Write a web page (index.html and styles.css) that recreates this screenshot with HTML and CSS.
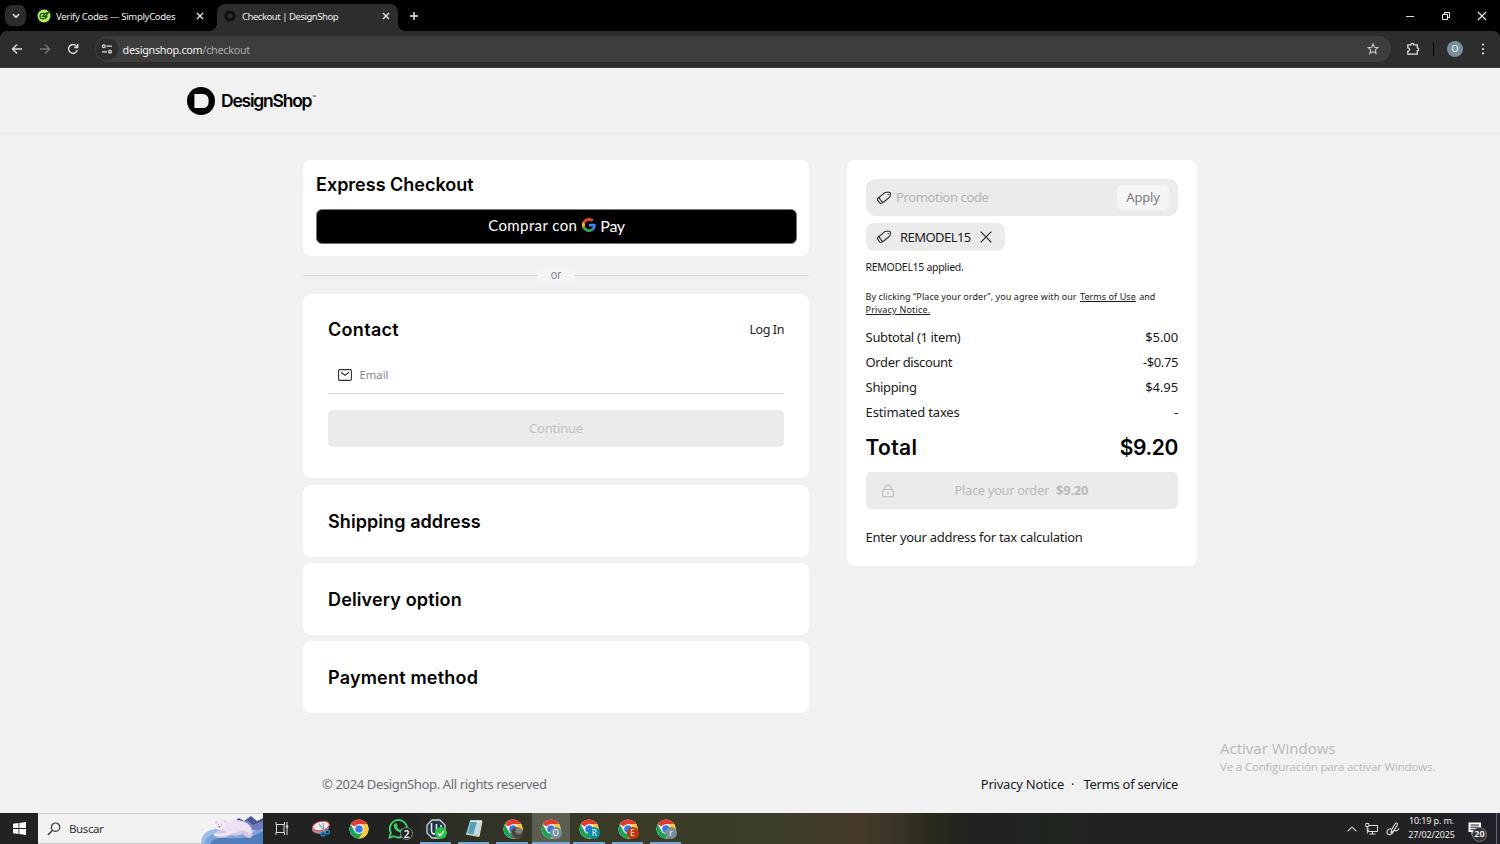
FILE: index.html
```html
<!DOCTYPE html>
<html lang="es">
<head>
<meta charset="utf-8">
<title>Checkout | DesignShop</title>
<link rel="stylesheet" href="styles.css">
</head>
<body>
<svg class="defs" width="0" height="0" aria-hidden="true">
  <symbol id="chrome" viewBox="0 0 20 20">
    <circle cx="10" cy="10" r="9.6" fill="#fff"/>
    <path d="M10 10 1.7 5.2A9.6 9.6 0 0 1 18.3 5.2H10Z" fill="#e33b2e"/>
    <path d="M10 5.200H18.300A9.600 9.600 0 0 1 10 19.600L14.200 12.400Z" fill="#fcc934"/>
    <path d="M1.7 5.2A9.6 9.6 0 0 0 10 19.6L14.2 12.4 10 14.5 5.8 12.4Z" fill="#1fa152"/>
    <circle cx="10" cy="10" r="4.8" fill="#fff"/><circle cx="10" cy="10" r="3.8" fill="#3b78e7"/>
  </symbol>
  <symbol id="tag" viewBox="0 0 16 14">
    <path d="M4 5.600 8.800 1.700Q9.400 1.200 10.200 1.200L13.200 1.300Q14.500 1.400 14.500 2.600L14.200 5Q14 5.900 13.400 6.400L7.800 11Q6.700 11.700 5.800 10.700L3.700 7.900Q3 6.500 4 5.600ZM4 5.600 2 7Q.8 8 1.500 9.200L3.700 11.900Q4.600 12.900 5.700 12.100L7.400 11.200" fill="none" stroke="#222" stroke-width="1.050" stroke-linejoin="round"/><circle cx="12.200" cy="3.600" r=".7" fill="#222"/>
  </symbol>
</svg>

<div class="tabs">
  <div class="tab-search"><svg width="8" height="6" viewBox="0 0 8 6"><path d="m1 1.2 3 3 3-3" fill="none" stroke="#eee" stroke-width="1.5"/></svg></div>
  <div class="tab tab-idle">
    <svg width="14" height="14" viewBox="0 0 14 14"><circle cx="7" cy="7" r="6.5" fill="#b0f45b"/><path d="M7.500 4.300H5.800a2.800 2.800 0 1 0 2.700 3.500M5.600 7.400h2.700L11.600 3.400 8.300 4.600 5.600 7.400Zm2.600 2 2.200-2.800" fill="none" stroke="#244b16" stroke-width="1.2"/></svg>
    <span class="tab-title title-one">Verify Codes — SimplyCodes</span>
    <svg class="close" width="8" height="8" viewBox="0 0 8 8"><path d="m1 1 6 6M7 1 1 7" stroke="#eee" stroke-width="1.3"/></svg>
  </div>
  <div class="tab tab-active">
    <svg width="12" height="12" viewBox="0 0 12 12"><circle cx="6" cy="6" r="5.5" fill="#111"/><path d="M4 3.8h2.600a1.800 1.800 0 0 1 1.800 1.800v.8a1.800 1.800 0 0 1-1.800 1.800H4Z" fill="#303030"/></svg>
    <span class="tab-title title-two">Checkout | DesignShop</span>
    <svg class="close" width="8" height="8" viewBox="0 0 8 8"><path d="m1 1 6 6M7 1 1 7" stroke="#eee" stroke-width="1.3"/></svg>
  </div>
  <svg class="new-tab" width="10" height="10" viewBox="0 0 10 10"><path d="M5 1v8M1 5h8" stroke="#eee" stroke-width="1.4"/></svg>
  <div class="window-controls">
    <svg width="10" height="10" viewBox="0 0 10 10"><path d="M1 5.500h8" stroke="#ddd"/></svg>
    <svg width="10" height="10" viewBox="0 0 10 10"><path d="M1.500 3.500h5v5h-5ZM3.500 3.500v-2h5v5h-2" fill="none" stroke="#eee"/></svg>
    <svg width="10" height="10" viewBox="0 0 10 10"><path d="m1 1 8 8M9 1 1 9" stroke="#eee" stroke-width="1.1"/></svg>
  </div>
</div>

<div class="toolbar">
  <svg class="nav-icon" width="12" height="12" viewBox="0 0 12 12"><path d="M11 6H1.700M6 1.500 1.500 6 6 10.500" fill="none" stroke="#ddd" stroke-width="1.4"/></svg>
  <svg class="nav-icon" width="12" height="12" viewBox="0 0 12 12"><path d="M1 6h9.300M6 1.500 10.500 6 6 10.500" fill="none" stroke="#777" stroke-width="1.3"/></svg>
  <svg class="nav-icon" width="12" height="12" viewBox="0 0 12 12"><path d="M10.300 6.800A4.400 4.400 0 1 1 9.300 3L10.500 4.200M10.700 1v3.500H7.200" fill="none" stroke="#ddd" stroke-width="1.4"/></svg>
  <div class="omnibox">
    <div class="site-info"><svg width="12" height="12" viewBox="0 0 12 12"><path d="M5.500 3.200H11M1 8.800h5" stroke="#ddd" stroke-width="1.3"/><circle cx="2.800" cy="3.200" r="1.4" fill="none" stroke="#ddd" stroke-width="1.2"/><circle cx="9" cy="8.800" r="1.4" fill="none" stroke="#ddd" stroke-width="1.2"/></svg></div>
    <span class="url">designshop.com<span class="url-path">/checkout</span></span>
    <svg class="star" width="12" height="12" viewBox="0 0 12 12"><path d="m6 1 1.400 3.300 3.600.3-2.700 2.300.8 3.600L6 8.600l-3.100 1.900.8-3.600L1 4.600l3.600-.3Z" fill="none" stroke="#ccc" stroke-width="1.1"/></svg>
  </div>
  <svg class="extension" width="14" height="14" viewBox="0 0 14 14"><path d="M1.800 2.800H5a1.400 1.400 0 0 1 2.800 0h3.500v3a1.500 1.500 0 0 1 0 3v3.400H1.800V9.300a1.600 1.600 0 0 0 0-3.400Z" fill="none" stroke="#ddd" stroke-width="1.3"/></svg>
  <span class="divider"></span>
  <span class="avatar">O</span>
  <svg class="menu" width="4" height="12" viewBox="0 0 4 12"><g fill="#ddd"><circle cx="2" cy="1.6" r="1.1"/><circle cx="2" cy="6" r="1.1"/><circle cx="2" cy="10.4" r="1.1"/></g></svg>
</div>

<header class="site-header">
  <svg width="28" height="28" viewBox="0 0 28 28"><circle cx="14" cy="14" r="14" fill="#000"/><path d="M7.400 7H16a5.600 5.600 0 0 1 5.600 5.600v3A5.400 5.400 0 0 1 16.200 21H7.400Z" fill="#f1f1f1"/></svg>
  <span class="wordmark">DesignShop</span><span class="tm">™</span>
</header>

<div class="checkout">
  <main class="steps">
    <section class="card express">
      <h2 class="w-express">Express Checkout</h2>
      <div class="gpay"><span class="gpay-buy">Comprar con</span>
        <svg width="14" height="14" viewBox="0 0 48 48"><path fill="#ea4335" d="M24 9.500c3.500 0 6.700 1.200 9.200 3.600l6.900-6.900C35.900 2.400 30.500 0 24 0 14.600 0 6.500 5.400 2.600 13.200l8 6.200C12.400 13.700 17.700 9.500 24 9.500Z"/><path fill="#4285f4" d="M47 24.600c0-1.600-.2-3.100-.4-4.600H24v9h12.900c-.6 3-2.200 5.500-4.700 7.200l7.700 6C44.400 38 47 31.800 47 24.600Z"/><path fill="#fbbc05" d="M10.500 28.600a14.500 14.500 0 0 1 0-9.200l-8-6.200a24 24 0 0 0 0 21.600Z"/><path fill="#34a853" d="M24 48c6.500 0 11.900-2.100 15.900-5.800l-7.700-6c-2.200 1.500-4.900 2.300-8.200 2.300-6.300 0-11.600-4.200-13.500-9.900l-8 6.200C6.500 42.600 14.600 48 24 48Z"/></svg>
        <span class="gpay-pay">Pay</span></div>
    </section>
    <div class="or"><span class="or-label">or</span></div>
    <section class="card contact">
      <div class="contact-head"><h2 class="w-contact">Contact</h2><span class="login">Log In</span></div>
      <div class="email"><svg width="14" height="12" viewBox="0 0 14 12"><rect x=".6" y=".6" width="12.800" height="10.800" rx="1.200" fill="none" stroke="#333" stroke-width="1.100"/><path d="m3 3.300 4 3 4-3" fill="none" stroke="#333" stroke-width="1.100"/></svg><span class="email-label">Email</span></div>
      <div class="continue"><span>Continue</span></div>
    </section>
    <section class="card step"><h2 class="w-shipping">Shipping address</h2></section>
    <section class="card step"><h2 class="w-delivery">Delivery option</h2></section>
    <section class="card step"><h2 class="w-payment">Payment method</h2></section>
  </main>

  <aside class="card summary">
    <div class="promo"><svg width="16" height="14"><use href="#tag"/></svg><span class="promo-hint">Promotion code</span><span class="apply">Apply</span></div>
    <div class="chip"><svg width="16" height="14"><use href="#tag"/></svg><span class="chip-code">REMODEL15</span><svg width="12" height="12" viewBox="0 0 12 12"><path d="m.7.7 10.600 10.600M11.300.7.7 11.300" stroke="#222" stroke-width="1.200"/></svg></div>
    <p class="applied"><span>REMODEL15 applied.</span></p>
    <p class="terms"><span class="terms-a">By clicking “Place your order”, you agree with our</span> <u class="terms-b">Terms of Use</u> <span class="terms-c">and</span><br><u class="terms-d">Privacy Notice.</u></p>
    <div class="row"><span class="r-sub">Subtotal (1 item)</span><span class="amount">$5.00</span></div>
    <div class="row"><span class="r-disc">Order discount</span><span class="amount amount-tight">-$0.75</span></div>
    <div class="row"><span class="r-ship">Shipping</span><span class="amount">$4.95</span></div>
    <div class="row"><span class="r-tax">Estimated taxes</span><span class="amount">-</span></div>
    <div class="total"><span class="total-label">Total</span><span class="total-sum">$9.20</span></div>
    <div class="place"><svg width="12" height="14" viewBox="0 0 12 14"><path d="M1.700 5.500h8.600q1 0 1 1v5.300q0 1-1 1H1.700q-1 0-1-1V6.500q0-1 1-1ZM3 5.500V4a3 3 0 0 1 6 0v1.500" fill="none" stroke="#b9b9b9" stroke-width="1.100"/><circle cx="6" cy="9.300" r=".9" fill="#b9b9b9"/></svg><span class="place-label">Place your order</span><b class="place-sum">$9.20</b></div>
    <p class="tax-note"><span>Enter your address for tax calculation</span></p>
  </aside>
</div>

<footer class="site-footer">
  <span class="copyright">© 2024 DesignShop. All rights reserved</span>
  <span class="legal"><span class="f-priv">Privacy Notice</span><span class="dot">·</span><span class="f-terms">Terms of service</span></span>
</footer>

<div class="watermark"><div class="wm-title"><span>Activar Windows</span></div><div class="wm-sub"><span>Ve a Configuración para activar Windows.</span></div></div>

<div class="taskbar">
  <div class="start"><svg width="13" height="13" viewBox="0 0 13 13"><path d="M0 1.800 5.500 1v5H0ZM6.300.9 13 0v6H6.300ZM0 6.900h5.500v5L0 11.200ZM6.300 6.900H13V13l-6.700-.9Z" fill="#fff"/></svg></div>
  <div class="search">
    <svg width="14" height="14" viewBox="0 0 14 14"><circle cx="8.600" cy="5.200" r="4.200" fill="none" stroke="#333" stroke-width="1.200"/><path d="M5.600 8.200.8 13" stroke="#333" stroke-width="1.300"/></svg>
    <span class="search-label">Buscar</span>
    <svg class="bear" width="62" height="30" viewBox="0 0 62 30">
      <path d="M32 8 38 4l5 3 7-5 6 5 6-3v22H36Z" fill="#4a5794"/><path d="m40 9 6-3 6 5 10-4v12H44Z" fill="#6f7dba"/>
      <path d="M0 30Q0 17 14 15q26-3 48 3v12Z" fill="#9dbfe6"/><path d="M3 30Q5 21 14 20q28 4 48-6v16Z" fill="#7ea5d8"/><path d="M9 30q3-7 14-6 26 2 39-7v13Z" fill="#4f7cbb"/>
      <path d="M15 18q3-3 8-3 4-8 14-8 11 0 14 8 2 8-2 9-4 0-7-4-6 3-12 1-6 4-15 2-3-2 0-5Z" fill="#d6c7e2"/>
      <path d="M20 14q5-8 15-8 10 0 14 7 2 5 0 8-5-7-12-3-9 4-17-4Z" fill="#ece1f2"/>
      <ellipse cx="20" cy="11.500" rx="5" ry="4.800" fill="#f3eaf4"/><circle cx="15.500" cy="8.200" r="1.500" fill="#ddcfe4"/><circle cx="24" cy="7.700" r="1.500" fill="#ddcfe4"/>
      <path d="M14 20.500q8 1.500 16-2" fill="none" stroke="#f1e7f4" stroke-width="2.500" stroke-linecap="round"/><ellipse cx="18.300" cy="12.600" rx=".9" ry=".7" fill="#4b4355"/><circle cx="17.300" cy="10.500" r=".4" fill="#444"/><circle cx="20.800" cy="10.300" r=".4" fill="#444"/>
    </svg>
  </div>
  <div class="app"><svg width="14" height="13" viewBox="0 0 14 13"><path d="M1 0v2.500h8.500V0M1 13v-2.500h8.500V13M1.500 2.500v8M9 2.500v8M12 0v13" fill="none" stroke="#ddd"/><path d="M10.800 3.500h2.400v2h-2.400Z" fill="#ddd"/></svg></div>
  <div class="app"><svg width="20" height="18" viewBox="0 0 20 18"><ellipse cx="9.500" cy="8" rx="8.700" ry="5.500" fill="#b08d8b" transform="rotate(-12 9.500 8)"/><ellipse cx="10" cy="6" rx="8.500" ry="4.600" fill="#edeaf0" stroke="#d1493f" transform="rotate(-12 10 6)"/><path d="m8 4 6 8m-2-9 1 9" stroke="#8e9aa6" stroke-width="1.200"/><circle cx="12" cy="14" r="1.900" fill="none" stroke="#1689c8" stroke-width="1.400"/><circle cx="16.500" cy="12" r="1.900" fill="none" stroke="#1689c8" stroke-width="1.400"/></svg></div>
  <div class="app"><svg width="20" height="20"><use href="#chrome"/></svg></div>
  <div class="app whatsapp"><svg width="21" height="21" viewBox="0 0 21 21"><path d="m1.500 19.500 1.300-4.700A8.700 8.700 0 1 1 6 18.200Z" fill="none" stroke="#38d366" stroke-width="1.900"/><path d="M7 5.500 8.500 5l1.200 2.500-.9 1.200q1.200 2.200 3.400 3.200l1.200-1.300 2.300 1.200q.2 3-3.200 3-3.500-.5-6-4.200-2-3.300.5-5.100Z" fill="#38d366"/></svg><span class="badge count">2</span></div>
  <div class="app open"><svg width="20" height="20" viewBox="0 0 20 20"><path d="M6 1h8l5 5v8l-5 5H6l-5-5V6Z" fill="#26364b" stroke="#cbd5de" stroke-width="1.300"/><path d="M5.500 4v7q0 4 2.500 4t2.500-5V5m0 5q0 5 2.500 4 2-1 2-8" fill="none" stroke="#e9eef2" stroke-width="1.500"/></svg><span class="badge check"><svg width="8" height="7" viewBox="0 0 8 7"><path d="m1 3.500 2 2L7 1" fill="none" stroke="#fff" stroke-width="1.600"/></svg></span></div>
  <div class="app open"><svg width="18" height="18" viewBox="0 0 18 18"><path d="M5 1h12l-3 15L1 14Z" fill="#8ec5d2"/><path d="m11 1 6 0-3 15-5-1Z" fill="#c4dde0"/><path d="m6 2-3 11 5 1L12 2Z" fill="#5a9eb5"/><path d="M5 1h12" stroke="#eef6f6" stroke-width="1.500"/><path d="m1 14 13 2.500 3-15" fill="none" stroke="#e6ddc6"/></svg></div>
  <div class="app open"><svg width="20" height="20"><use href="#chrome"/></svg><span class="badge photo"></span></div>
  <div class="app open current"><svg width="20" height="20"><use href="#chrome"/></svg><span class="badge slate">O</span></div>
  <div class="app open"><svg width="20" height="20"><use href="#chrome"/></svg><span class="badge teal">R</span></div>
  <div class="app open"><svg width="20" height="20"><use href="#chrome"/></svg><span class="badge rust">E</span></div>
  <div class="app open"><svg width="20" height="20"><use href="#chrome"/></svg><span class="badge slate">r</span></div>
  <div class="tray">
    <svg width="10" height="6" viewBox="0 0 10 6"><path d="m.7 5.200 4.300-4 4.300 4" fill="none" stroke="#ddd" stroke-width="1.100"/></svg>
    <svg class="net" width="13" height="12" viewBox="0 0 13 12"><path d="M4 2.500h8.500v6H3V5M7.500 8.500V11M4.500 11h6M.8.500h3v3h-3ZM2.300 3.500v7" fill="none" stroke="#ddd"/></svg>
    <svg class="pen" width="14" height="14" viewBox="0 0 14 14"><path d="M5 10.500 5.700 7.500 9 2q1.200-1.500 2-.8t.2 2L7.500 9 5 10.500ZM5 6.500Q1 7.500 1 10.300t3.300 2.200q2.200-.3 3.200-3 .8-1.500 2-.8t3.700-2.200" fill="none" stroke="#ddd" stroke-width="1.100"/></svg>
    <div class="clock"><span class="time">10:19 p. m.</span><span class="date">27/02/2025</span></div>
    <div class="notice"><svg width="14" height="14" viewBox="0 0 14 14"><path d="M.5.500h12.500v9.500H6L3.500 13v-3h-3Z" fill="#fff"/><path d="M2.500 3h8.500M2.500 5.200h8.500M2.500 7.400h6" stroke="#25222b"/></svg><span class="badge twenty">20</span></div>
    <span class="show-desktop"></span>
  </div>
</div>
</body>
</html>
```
FILE: styles.css
```css
* { box-sizing: border-box; }
body { margin: 0; width: 1500px; height: 844px; overflow: hidden; display: flex; flex-direction: column; background: #f1f1f1; color: #1b1b1b; font-family: "Noto Sans", sans-serif; font-size: 13px; position: relative; }
h2, p { margin: 0; }
span, u, b { white-space: nowrap; }
svg { display: block; flex: none; }
.defs { position: absolute; }

.tabs { height: 31px; flex: none; background: #000; display: flex; align-items: flex-end; color: #eee; }
.tab-search { width: 21px; height: 21px; margin: 0 0 5px 5px; border-radius: 7px; background: #2b2b2b; display: flex; align-items: center; justify-content: center; }
.tab { display: flex; align-items: center; height: 26px; padding-bottom: 4px; font-size: 9.500px; }
.tab-idle { width: 191px; padding-left: 11px; padding-right: 13px; }
.tab-active { width: 181px; height: 27px; padding: 0 8px 4px 7px; background: #2d2d2d; border-radius: 8px 8px 0 0; position: relative; }
.tab-active::before, .tab-active::after { content: ""; position: absolute; bottom: 0; width: 7px; height: 7px; }
.tab-active::before { left: -7px; background: radial-gradient(circle at 0 0, transparent 6.5px, #2d2d2d 7px); }
.tab-active::after { right: -7px; background: radial-gradient(circle at 100% 0, transparent 6.5px, #2d2d2d 7px); }
.tab-title { margin-left: 5px; }
.title-one { letter-spacing: -.3px; }
.title-two { margin-left: 6px; letter-spacing: -.46px; padding-top: 1px; }
.close { margin-left: auto; }
.new-tab { margin: 0 0 10px 11px; }
.window-controls { margin-left: auto; display: flex; gap: 26px; padding: 0 13px 10px 0; }

.toolbar { height: 37px; flex: none; background: #2d2d2d; border-radius: 7px 7px 0 0; box-shadow: 0 -7px 0 0 #000; display: flex; align-items: center; padding-left: 11px; border-bottom: 1px solid #3a3a3a; position: relative; clip-path: inset(0); }
.nav-icon { margin-right: 16px; }
.omnibox { width: 1296px; height: 26px; border-radius: 13px; background: #3d3d3d; display: flex; align-items: center; padding: 0 12px 0 1px; }
.site-info { width: 22px; height: 22px; border-radius: 50%; background: #2d2d2d; display: flex; align-items: center; justify-content: center; }
.url { margin-left: 4.600px; font-size: 10.800px; letter-spacing: -.28px; color: #f2f2f2; }
.url-path { color: #aaa; }
.star { margin-left: auto; }
.extension { margin-left: 15px; }
.divider { width: 1px; height: 13px; margin-left: 13px; background: #000; }
.avatar { width: 16px; height: 16px; margin-left: 13px; border-radius: 50%; background: #78909c; color: #fff; font-size: 9px; line-height: 16px; text-align: center; }
.menu { margin-left: 18px; }

.site-header { height: 66px; flex: none; display: flex; align-items: center; padding-left: 187px; border-bottom: 1px solid #ebebeb; }
.wordmark { margin-left: 6px; font: 600 17.500px/28px "Inter", sans-serif; letter-spacing: -1.220px; color: #000; }
.tm { font-size: 5px; align-self: flex-start; margin: 26px 0 0 1px; }

.checkout { display: flex; gap: 38px; align-items: flex-start; padding: 26px 0 0 303px; flex: none; height: 606px; }
.steps { width: 506px; display: flex; flex-direction: column; }
.card { background: #fff; border-radius: 8px; }
h2 { font: 600 18px/24px "Inter", sans-serif; color: #000; }
.w-contact { letter-spacing: .3px; }
.w-shipping { letter-spacing: .08px; }
.w-delivery { letter-spacing: .14px; }
.w-payment { letter-spacing: .2px; }
.express { height: 96px; padding: 13px 12px 0 13px; }
.gpay { height: 35px; margin-top: 12px; border: 1px solid #777; border-radius: 6px; background: #000; color: #fff; display: flex; align-items: center; justify-content: center; font-family: "Lato", sans-serif; font-size: 15px; padding-bottom: 3px; }
.gpay-buy { letter-spacing: .4px; }
.gpay svg { margin: 0 4px 0 5px; }
.gpay-pay { font-size: 16px; letter-spacing: -.3px; }
.or { height: 38px; display: flex; align-items: center; color: #85858b; }
.or::before, .or::after { content: ""; flex: 1; border-top: 1px solid #dadada; }
.or-label { width: 36px; text-align: center; font: 400 11px/15px "Inter", sans-serif; background: #f4f4f6; border-radius: 3px; }
.contact { height: 184px; padding: 24px 25px 0; margin-bottom: 7px; }
.contact-head { display: flex; justify-content: space-between; align-items: center; height: 24px; }
.login { font-size: 12.500px; letter-spacing: -.4px; padding-bottom: 2px; }
.email { margin-top: 15px; height: 37px; border-bottom: 1px solid #d8d8d8; display: flex; align-items: center; padding-left: 9.500px; }
.email-label { margin-left: 8px; font-size: 11.300px; color: #88888c; padding-bottom: 2px; }
.continue { margin-top: 16px; height: 37px; border-radius: 5px; background: #ebebeb; color: #c1c1c1; display: flex; align-items: center; justify-content: center; padding-bottom: 2px; letter-spacing: -.2px; }
.step { height: 72px; padding: 25px 25px 0; margin-bottom: 6px; }

.summary { width: 350px; height: 406px; padding: 19px 19px 0 18.600px; }
.promo { height: 37px; border-radius: 9px; background: #ebebec; display: flex; align-items: center; padding: 0 9px 0 10.400px; }
.promo-hint { margin-left: 4px; letter-spacing: -.36px; color: #b3b3b5; padding-bottom: 2px; }
.apply { margin-left: auto; width: 52px; height: 25px; border-radius: 5px; background: #f5f5f5; color: #7b7b7b; text-align: center; line-height: 24px; letter-spacing: -.2px; }
.chip { width: 139px; height: 28px; margin-top: 7px; border-radius: 8px; background: #ebebec; display: flex; align-items: center; padding-left: 10.400px; }
.chip-code { margin: 0 9.500px 0 8px; letter-spacing: -.55px; }
.applied { margin-top: 8px; font-size: 10.500px; line-height: 16px; letter-spacing: -.3px; }
.terms { margin-top: 15px; height: 26px; font-size: 9px; line-height: 13px; }
.terms-a { letter-spacing: .07px; }
.terms-b { letter-spacing: .06px; margin: 0 1px; }
.terms-d { letter-spacing: .18px; }
.row { height: 25px; display: flex; justify-content: space-between; align-items: center; }
.terms + .row { margin-top: 8px; }
.r-sub { letter-spacing: -.35px; }
.r-disc { letter-spacing: -.38px; }
.r-ship { letter-spacing: -.35px; }
.r-tax { letter-spacing: -.17px; }
.amount { letter-spacing: -.1px; }
.amount-tight { letter-spacing: -.4px; }
.total { height: 32px; margin-top: 8px; display: flex; justify-content: space-between; align-items: center; font: 600 21px/30px "Inter", sans-serif; color: #000; }
.total-label { letter-spacing: .3px; }
.total-sum { letter-spacing: -.4px; }
.place { height: 37px; margin-top: 8px; border-radius: 5px; background: #ebebeb; color: #b9b9bb; display: flex; align-items: center; padding-left: 16px; }
.place-label { margin-left: 61px; letter-spacing: -.38px; padding-bottom: 1px; }
.place-sum { margin-left: 7px; letter-spacing: -.2px; padding-bottom: 1px; }
.tax-note { margin-top: 18px; line-height: 20px; letter-spacing: -.29px; }

.site-footer { display: flex; justify-content: space-between; align-items: center; width: 856px; height: 22px; margin: 33px 0 0 322px; flex: none; color: #6d6d72; }
.copyright { letter-spacing: -.36px; }
.legal { display: flex; color: #1b1b1b; }
.f-priv { letter-spacing: -.2px; }
.f-terms { letter-spacing: -.28px; }
.dot { margin: 0 9px 0 7px; }

.watermark { position: absolute; left: 1220px; top: 738px; color: #b8b8b8; font-family: "Open Sans", "Noto Sans", sans-serif; }
.wm-title { font-size: 15px; line-height: 20px; }
.wm-sub { font-size: 11.500px; line-height: 17px; letter-spacing: -.16px; }

.taskbar { height: 31px; flex: none; margin-top: auto; display: flex; background: linear-gradient(90deg, #222 0 400px, #303126 470px, #393b28 600px, #3d3e2a 780px, #45392a 860px, #3d3628 890px, #2a2b1d 930px, #222 970px, #20251f 1060px, #222 1110px, #222 1400px, #211f29 1500px); }
.start { width: 38px; display: flex; align-items: center; justify-content: center; }
.search { width: 225px; background: #f2f2f2; border-top: 1px solid #ccc; border-bottom: 1px solid #ccc; display: flex; align-items: center; padding-left: 9px; color: #333; }
.search-label { margin-left: 8px; font-size: 11.500px; letter-spacing: -.4px; }
.bear { margin-left: auto; }
.app { width: 38.400px; display: flex; align-items: center; justify-content: center; position: relative; }
.app.open::after { content: ""; position: absolute; left: 3px; right: 4px; bottom: 0; height: 2px; background: #76a9d6; }
.app.current { background: #5b5e50; }
.app.current::after { left: 0; right: 0; }
.whatsapp { padding-left: 2px; }
.badge { position: absolute; left: 18px; top: 14px; width: 12px; height: 12px; border-radius: 50%; color: #fff; font-size: 8px; line-height: 12px; text-align: center; display: flex; align-items: center; justify-content: center; }
.count { left: 22px; font-size: 10px; font-weight: 600; background: #222; border: 1px solid #888; width: 13px; height: 13px; }
.check { background: #20c33f; }
.photo { background: radial-gradient(circle at 65% 30%, #837e7b 0 20%, #3e3a39 45%, #645c58 75%); }
.slate { background: #78909c; }
.teal { background: #078ca0; }
.rust { background: #c6360d; }
.tray { margin-left: auto; display: flex; align-items: center; height: 31px; color: #eee; }
.net { margin-left: 8px; }
.pen { margin-left: 8px; }
.clock { width: 47px; margin-left: 8.500px; display: flex; flex-direction: column; align-items: center; font-size: 9px; line-height: 14px; letter-spacing: -.15px; padding-bottom: 1px; }
.notice { position: relative; margin-left: 13px; width: 14px; }
.twenty { left: 4px; top: 5px; width: 15px; height: 15px; background: #333; border: 1px solid #777; font-size: 9px; font-weight: 600; }
.show-desktop { width: 1px; height: 31px; margin: 0 3px 0 14px; background: #666; }
```
